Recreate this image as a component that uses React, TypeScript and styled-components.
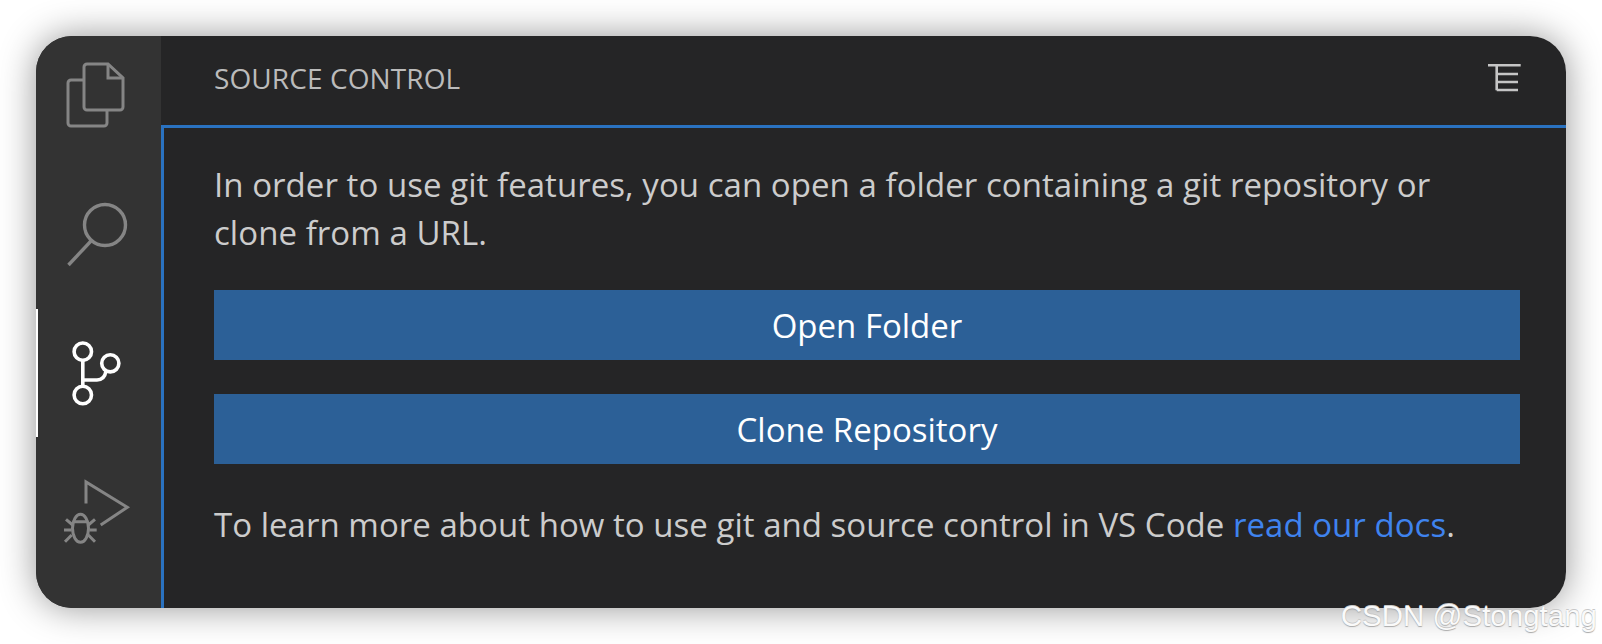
import React from "react";
import styled, { createGlobalStyle } from "styled-components";

const Global = createGlobalStyle`
  html, body { margin: 0; padding: 0; background: #fff; }
  body { font-family: "Open Sans", "Noto Sans", sans-serif; width: 1602px; height: 644px; overflow: hidden; }
`;
const Page = styled.div`
  position: relative;
  width: 1602px;
  height: 644px;
  padding: 36px;
  box-sizing: border-box;
`;
const Window = styled.div`
  display: flex;
  height: 572px;
  border-radius: 36px;
  overflow: hidden;
  background: #252526;
`;
const Shadow = styled.div`
  border-radius: 36px;
  box-shadow: 0 0 36px rgba(0, 0, 0, 0.42);
`;
const ActivityBar = styled.nav`
  position: relative;
  width: 125px;
  flex: none;
  background: #333333;
  display: flex;
  flex-direction: column;
  gap: 75px;
  padding: 27px 0 0 30px;
  box-sizing: border-box;
`;
const ActiveMark = styled.span`
  position: absolute;
  left: 0;
  top: 273px;
  width: 2px;
  height: 128px;
  background: #fff;
`;
const Icon = styled.svg<{ $active?: boolean }>`
  display: block;
  width: 64px;
  height: 64px;
  flex: none;
  overflow: visible;
  fill: none;
  stroke: ${(p) => (p.$active ? "#ffffff" : "#858585")};
`;
const Sidebar = styled.section`
  flex: 1;
  min-width: 0;
  display: flex;
  flex-direction: column;
`;
const Header = styled.header`
  height: 89px;
  flex: none;
  display: flex;
  align-items: center;
  justify-content: space-between;
  padding: 0 45px 0 53px;
`;
const Title = styled.h2`
  margin: 0 0 6px;
  font-size: 28px;
  font-weight: 400;
  letter-spacing: 0.1px;
  color: #bbbbbb;
`;
const MenuIcon = styled.svg`
  width: 34px;
  height: 30px;
  margin-bottom: 5px;
  fill: none;
  stroke: #c5c5c5;
  stroke-width: 2.6;
`;
const Body = styled.div`
  flex: 1;
  border-top: 3px solid #2a72c0;
  border-left: 3px solid #2a72c0;
  padding: 33px 46px 0 50px;
  display: flex;
  flex-direction: column;
`;
const Paragraph = styled.p`
  margin: 0;
  font-size: 33px;
  line-height: 48px;
  color: #cccccc;
`;
const Intro = styled(Paragraph)`
  max-width: 1250px;
  letter-spacing: 0.05px;
`;
const Button = styled.button`
  display: block;
  width: 100%;
  height: 70px;
  margin-top: 34px;
  border: 0;
  padding: 0;
  background: #2c6097;
  color: #ffffff;
  font-family: inherit;
  font-size: 33px;
`;
const FirstButton = styled(Button)`
  margin-top: 33px;
`;
const Tail = styled(Paragraph)`
  margin-top: 37px;
  letter-spacing: 0.03px;
`;
const DocLink = styled.a`
  color: #3f83ee;
  text-decoration: none;
`;
const Watermark = styled.div`
  position: absolute;
  right: 5px;
  bottom: 10px;
  font-family: "Liberation Sans", sans-serif;
  font-size: 29.5px;
  line-height: 36px;
  color: #fafafa;
  text-shadow: 0 1px 1px #a8a8a8, 0 -1px 0 #c8c8c8;
`;

export default function App() {
  return (
    <Page>
      <Global />
      <Shadow>
        <Window>
          <ActivityBar>
            <Icon viewBox="0 0 64 64" strokeWidth={3}>
              <path d="M41 47v13a3 3 0 0 1-3 3H5a3 3 0 0 1-3-3V20a3 3 0 0 1 3-3h13" />
              <path d="M42 1H21a3 3 0 0 0-3 3v40a3 3 0 0 0 3 3h33a3 3 0 0 0 3-3V15z" />
              <path d="M42 1v14h15" />
            </Icon>
            <Icon viewBox="0 0 64 64" strokeWidth={3.4}>
              <circle cx="39" cy="23" r="20.5" />
              <path d="M2.5 63L25 39" />
            </Icon>
            <Icon viewBox="0 0 64 64" $active strokeWidth={3.6}>
              <circle cx="16.8" cy="10.7" r="8.7" />
              <circle cx="44.3" cy="22.3" r="8.6" />
              <circle cx="16.8" cy="54" r="8.7" />
              <path d="M16.8 19.5v26" />
              <path d="M17 39h14c5 0 8-3 9-9" />
            </Icon>
            <Icon viewBox="0 0 64 64" strokeWidth={3}>
              <path d="M20 23.5V2l41.3 25.3L34.7 45" />
              <ellipse cx="14.5" cy="48.3" rx="8" ry="14" />
              <path d="M6.7 41.7h15.6M0 39.3L6.7 45M29 39.3L22.3 45M-2 50h7.7M30.7 50h-7.4M-1 61.7L5.7 55M29 61.7L22.3 55" />
            </Icon>
            <ActiveMark />
          </ActivityBar>
          <Sidebar>
            <Header>
              <Title>SOURCE CONTROL</Title>
              <MenuIcon viewBox="0 0 34 30">
                <path d="M1 2.3h32.7M9.7 2.3v25M9.7 11h21.3M9.7 19h21.3M9.7 27h21.3" />
              </MenuIcon>
            </Header>
            <Body>
              <Intro>
                In order to use git features, you can open a folder containing a git repository or clone from a URL.
              </Intro>
              <FirstButton>Open Folder</FirstButton>
              <Button>Clone Repository</Button>
              <Tail>
                To learn more about how to use git and source control in VS Code <DocLink>read our docs</DocLink>.
              </Tail>
            </Body>
          </Sidebar>
        </Window>
      </Shadow>
      <Watermark>CSDN @Stongtang</Watermark>
    </Page>
  );
}
